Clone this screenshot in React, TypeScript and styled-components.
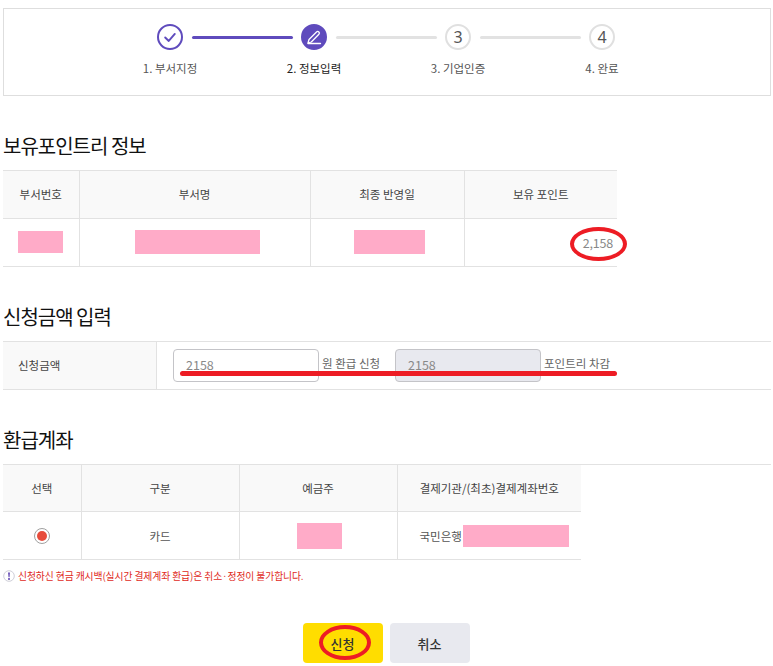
import React from "react";
import styled, { createGlobalStyle } from "styled-components";

const Global = createGlobalStyle`
  html, body { margin: 0; padding: 0; background: #fff; }
  body { font-family: "Noto Sans CJK KR", "Noto Sans", sans-serif; color: #555; font-size: 12px; overflow: hidden; }
  * { box-sizing: border-box; }
`;

const Page = styled.div`
  width: 773px;
  padding: 8px 2px 0 3px;
`;

const StepperBox = styled.div`
  height: 88px;
  border: 1px solid #dedede;
  padding: 15px 2px 0 0;
`;

const Track = styled.div`
  display: flex;
  align-items: center;
  justify-content: center;
  gap: 8px;
`;

const StepCircle = styled.div<{ $state: "done" | "active" | "todo" }>`
  width: 26px;
  height: 26px;
  border-radius: 50%;
  flex: none;
  display: flex;
  align-items: center;
  justify-content: center;
  font-size: 16px;
  line-height: 1;
  color: #555;
  font-family: "Noto Sans", sans-serif;
  border: 2px solid ${(p) => (p.$state === "todo" ? "#e0e0e0" : "#5f4bbd")};
  background: ${(p) => (p.$state === "active" ? "#5f4bbd" : "#fff")};
`;

const Connector = styled.div<{ $on?: boolean }>`
  width: 101px;
  height: 3px;
  margin-left: 1px;
  border-radius: 2px;
  background: ${(p) => (p.$on ? "#5f4bbd" : "#e2e2e2")};
`;

const Labels = styled.div`
  display: flex;
  justify-content: center;
  margin-top: 10px;
`;

const StepLabel = styled.div<{ $active?: boolean }>`
  width: 144px;
  text-align: center;
  font-size: 11.5px;
  line-height: 17px;
  color: ${(p) => (p.$active ? "#222" : "#555")};
`;

const Title = styled.h2`
  margin: 34px 0 10px;
  height: 30px;
  font-size: 20px;
  line-height: 31px;
  font-weight: 400;
  letter-spacing: -1px;
  color: #111;
`;

const Table = styled.table<{ $w: number }>`
  width: ${(p) => p.$w}px;
  table-layout: fixed;
  border-collapse: collapse;
  font-size: 11.5px;
`;

const TableRule = styled.div<{ $w?: number }>`
  width: ${(p) => (p.$w ? `${p.$w}px` : "auto")};
  border-top: 1px solid #e2e2e2;
`;

const Th = styled.th`
  height: 47px;
  padding: 0;
  background: #f9f9f9;
  font-weight: 400;
  color: #444;
  border-bottom: 1px solid #e2e2e2;
  border-left: 1px solid #e2e2e2;
  &:first-child { border-left: 0; }
`;

const Td = styled.td<{ $align?: string }>`
  position: relative;
  height: 48px;
  padding: 0;
  text-align: ${(p) => p.$align || "center"};
  border-bottom: 1px solid #e2e2e2;
  border-left: 1px solid #e2e2e2;
  color: #555;
  &:first-child { border-left: 0; }
`;

const Redact = styled.span<{ $w: number; $h: number; $shift?: number }>`
  display: inline-block;
  width: ${(p) => p.$w}px;
  height: ${(p) => p.$h}px;
  margin-left: ${(p) => p.$shift || 0}px;
  background: #ffabc8;
  vertical-align: middle;
`;

const PointValue = styled.span`
  display: block;
  text-align: right;
  padding-right: 4px;
  font-size: 12.5px;
  letter-spacing: -0.2px;
  color: #888;
`;

const Ellipse = styled.span<{ $l: number; $t: number; $w: number; $h: number }>`
  position: absolute;
  left: ${(p) => p.$l}px;
  top: ${(p) => p.$t}px;
  width: ${(p) => p.$w}px;
  height: ${(p) => p.$h}px;
  border: 4.5px solid #ed1c24;
  border-radius: 50%;
  pointer-events: none;
`;

const FormRow = styled.div`
  position: relative;
  display: flex;
  height: 48px;
  border-bottom: 1px solid #e2e2e2;
`;

const FormLabel = styled.div`
  width: 154px;
  flex: none;
  background: #f9f9f9;
  border-right: 1px solid #e2e2e2;
  padding-left: 15px;
  display: flex;
  align-items: center;
  font-size: 11.5px;
  color: #444;
`;

const FormBody = styled.div`
  display: flex;
  align-items: center;
  padding: 0 0 0 16px;
  font-size: 11.5px;
  color: #666;
`;

const Input = styled.div<{ $disabled?: boolean }>`
  width: 146px;
  height: 33px;
  border: 1px solid #c4c4c8;
  border-radius: 4px;
  background: ${(p) => (p.$disabled ? "#e8e9ef" : "#fff")};
  padding: 0 0 2px 12px;
  display: flex;
  align-items: center;
  font-size: 12.5px;
  color: #888;
`;

const Unit = styled.span<{ $w: number }>`
  width: ${(p) => p.$w}px;
  padding-left: 3px;
  margin-top: -4px;
  white-space: nowrap;
`;

const Strike = styled.div`
  position: absolute;
  left: 177px;
  top: 29px;
  width: 437px;
  height: 5px;
  border-radius: 3px;
  background: #ed1c24;
`;

const Radio = styled.span`
  display: inline-flex;
  align-items: center;
  justify-content: center;
  width: 16px;
  height: 16px;
  border-radius: 50%;
  border: 1px solid #a0a0a0;
  background: #fff;
  vertical-align: middle;
  &::after {
    content: "";
    width: 10px;
    height: 10px;
    border-radius: 50%;
    background: #e74c3c;
  }
`;

const AccountCell = styled.div`
  display: flex;
  align-items: center;
  padding-left: 22px;
`;

const Notice = styled.div`
  display: flex;
  align-items: center;
  gap: 3px;
  height: 16px;
  margin-top: 8px;
  font-size: 9.8px;
  letter-spacing: -0.1px;
  color: #e02a1c;
`;

const Buttons = styled.div`
  display: flex;
  justify-content: center;
  gap: 7px;
  margin: 39px 2px 0 0;
`;

const Btn = styled.button<{ $primary?: boolean }>`
  position: relative;
  width: 80px;
  height: 40px;
  border: 0;
  border-radius: 4px;
  padding: 0;
  font-family: inherit;
  font-size: 13px;
  font-weight: 500;
  color: #333;
  background: ${(p) => (p.$primary ? "#ffdd00" : "#e8e9ef")};
`;

const Check = () => (
  <svg width="14" height="14" viewBox="0 0 16 16" fill="none" stroke="#5f4bbd" strokeWidth="2.2" strokeLinecap="round" strokeLinejoin="round">
    <path d="M2.5 8.5 6.6 12.5 13.5 4.5" />
  </svg>
);

const Pen = () => (
  <svg width="16" height="16" viewBox="0 0 16 16" fill="none" stroke="#fff" strokeWidth="1.3" strokeLinecap="round" strokeLinejoin="round">
    <path d="M2 14 3 10.5 10.5 3a1.6 1.6 0 0 1 2.4 2.3L5.3 13Z" />
    <path d="M2 14.5H14.5" />
  </svg>
);

const Info = () => (
  <svg width="12" height="12" viewBox="0 0 12 12">
    <circle cx="6" cy="6" r="5.3" fill="#fff" stroke="#cfcfd8" />
    <path d="M5.1 2.5h1.8L6.5 7.2h-.9Z" fill="#5b3fb0" />
    <circle cx="6" cy="8.9" r="1" fill="#5b3fb0" />
  </svg>
);

export default function App() {
  return (
    <Page>
      <Global />
      <StepperBox>
        <Track>
          <StepCircle $state="done"><Check /></StepCircle>
          <Connector $on />
          <StepCircle $state="active"><Pen /></StepCircle>
          <Connector />
          <StepCircle $state="todo">3</StepCircle>
          <Connector />
          <StepCircle $state="todo">4</StepCircle>
        </Track>
        <Labels>
          <StepLabel>1. 부서지정</StepLabel>
          <StepLabel $active>2. 정보입력</StepLabel>
          <StepLabel>3. 기업인증</StepLabel>
          <StepLabel>4. 완료</StepLabel>
        </Labels>
      </StepperBox>

      <Title>보유포인트리 정보</Title>
      <TableRule $w={614}>
        <Table $w={614}>
          <colgroup>
            <col width="76" />
            <col width="231" />
            <col width="154" />
            <col width="153" />
          </colgroup>
          <thead>
            <tr>
              <Th>부서번호</Th>
              <Th>부서명</Th>
              <Th>최종 반영일</Th>
              <Th>보유 포인트</Th>
            </tr>
          </thead>
          <tbody>
            <tr>
              <Td><Redact $w={45} $h={22} /></Td>
              <Td><Redact $w={125} $h={24} $shift={5} /></Td>
              <Td><Redact $w={71} $h={24} $shift={4} /></Td>
              <Td>
                <PointValue>2,158</PointValue>
                <Ellipse $l={105} $t={8} $w={57} $h={34} />
              </Td>
            </tr>
          </tbody>
        </Table>
      </TableRule>

      <Title>신청금액 입력</Title>
      <TableRule>
        <FormRow>
          <FormLabel>신청금액</FormLabel>
          <FormBody>
            <Input>2158</Input>
            <Unit $w={76}>원 환급 신청</Unit>
            <Input $disabled>2158</Input>
            <Unit $w={76}>포인트리 차감</Unit>
          </FormBody>
          <Strike />
        </FormRow>
      </TableRule>

      <Title>환급계좌</Title>
      <TableRule>
        <Table $w={578}>
          <colgroup>
            <col width="78" />
            <col width="158" />
            <col width="158" />
            <col width="184" />
          </colgroup>
          <thead>
            <tr>
              <Th>선택</Th>
              <Th>구분</Th>
              <Th>예금주</Th>
              <Th>결제기관/(최초)결제계좌번호</Th>
            </tr>
          </thead>
          <tbody>
            <tr>
              <Td><Radio /></Td>
              <Td>카드</Td>
              <Td><Redact $w={45} $h={26} $shift={2} /></Td>
              <Td $align="left">
                <AccountCell>
                  국민은행
                  <Redact $w={106} $h={22} $shift={1} />
                </AccountCell>
              </Td>
            </tr>
          </tbody>
        </Table>
      </TableRule>

      <Notice>
        <Info />
        신청하신 현금 캐시백(실시간 결제계좌 환급)은 취소·정정이 불가합니다.
      </Notice>

      <Buttons>
        <Btn $primary>
          신청
          <Ellipse $l={16} $t={2} $w={52} $h={35} />
        </Btn>
        <Btn>취소</Btn>
      </Buttons>
    </Page>
  );
}
